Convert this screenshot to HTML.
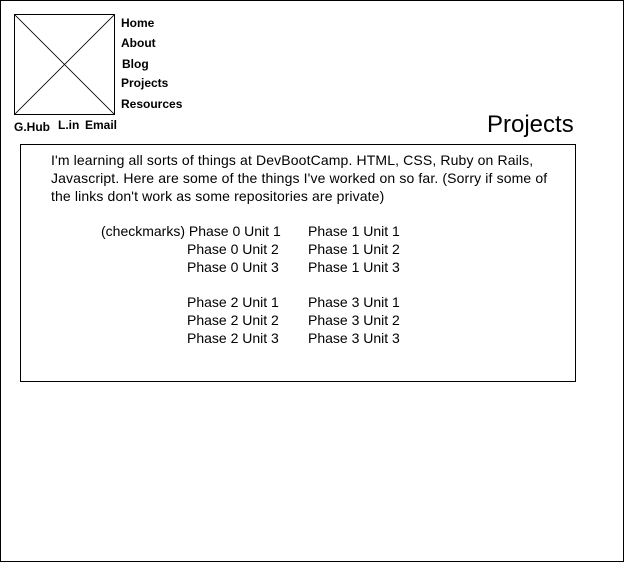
<!DOCTYPE html>
<html><head><style>
body{margin:0;width:632px;height:564px;background:#fff;font-family:"Liberation Sans",Arial,sans-serif;position:relative;overflow:hidden}
.a{position:absolute;white-space:nowrap;color:#000}
.n{font-size:12px;font-weight:bold}
.t{font-size:14px;line-height:18px}
</style></head><body>
<div class="a" style="left:0;top:0;width:622px;height:560px;border:1px solid #000"></div>
<svg class="a" style="left:14px;top:14px" width="101" height="101"><rect x="0.5" y="0.5" width="100" height="100" fill="none" stroke="#000"/><line x1="0" y1="0" x2="101" y2="101" stroke="#000" stroke-width="0.8"/><line x1="101" y1="0" x2="0" y2="101" stroke="#000" stroke-width="0.8"/></svg>
<div class="a n" style="left:121px;top:16px">Home</div>
<div class="a n" style="left:121px;top:36px">About</div>
<div class="a n" style="left:122px;top:57px">Blog</div>
<div class="a n" style="left:121px;top:76px">Projects</div>
<div class="a n" style="left:121px;top:97px">Resources</div>
<div class="a n" style="left:14px;top:120px">G.Hub</div>
<div class="a n" style="left:58px;top:118px">L.in</div>
<div class="a n" style="left:85px;top:118px">Email</div>
<div class="a" style="left:487px;top:111px;font-size:24px">Projects</div>
<div class="a" style="left:20px;top:144px;width:554px;height:236px;border:1px solid #000"></div>
<div class="a t" style="left:51px;top:151px;letter-spacing:0.13px">I'm learning all sorts of things at DevBootCamp. HTML, CSS, Ruby on Rails,<br>Javascript. Here are some of the things I've worked on so far. (Sorry if some of<br>the links don't work as some repositories are private)</div>
<div class="a t" style="left:101px;top:222px">(checkmarks) Phase 0 Unit 1</div>
<div class="a t" style="left:187px;top:240px">Phase 0 Unit 2<br>Phase 0 Unit 3</div>
<div class="a t" style="left:308px;top:222px">Phase 1 Unit 1<br>Phase 1 Unit 2<br>Phase 1 Unit 3</div>
<div class="a t" style="left:187px;top:293px">Phase 2 Unit 1<br>Phase 2 Unit 2<br>Phase 2 Unit 3</div>
<div class="a t" style="left:308px;top:293px">Phase 3 Unit 1<br>Phase 3 Unit 2<br>Phase 3 Unit 3</div>
</body></html>
